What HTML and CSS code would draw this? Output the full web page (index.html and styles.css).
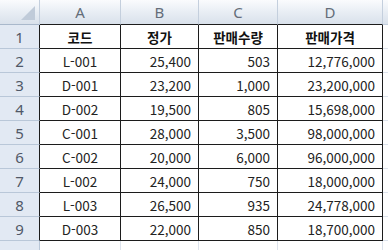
FILE: index.html
```html
<!DOCTYPE html>
<html lang="ko">
<head>
    <meta charset="UTF-8">
    <meta name="viewport" content="width=device-width, initial-scale=1.0">
    <title>판매 시트</title>
    <link rel="stylesheet" href="styles.css">
</head>
<body>
    <div class="sheet">
        <table class="grid">
            <colgroup>
                <col class="col-head">
                <col class="col-a">
                <col class="col-b">
                <col class="col-c">
                <col class="col-d">
                <col class="col-e">
            </colgroup>
            <thead>
                <tr>
                    <th class="corner"><span class="corner-mark"></span></th>
                    <th class="col-label">A</th>
                    <th class="col-label">B</th>
                    <th class="col-label">C</th>
                    <th class="col-label">D</th>
                    <th class="col-label col-out"></th>
                </tr>
            </thead>
            <tbody>
                <tr>
                    <th class="row-label">1</th>
                    <td class="title">코드</td>
                    <td class="title">정가</td>
                    <td class="title">판매수량</td>
                    <td class="title">판매가격</td>
                    <td class="out"></td>
                </tr>
                <tr>
                    <th class="row-label">2</th>
                    <td class="code">L-001</td>
                    <td class="num">25,400</td>
                    <td class="num">503</td>
                    <td class="num">12,776,000</td>
                    <td class="out"></td>
                </tr>
                <tr>
                    <th class="row-label">3</th>
                    <td class="code">D-001</td>
                    <td class="num">23,200</td>
                    <td class="num">1,000</td>
                    <td class="num">23,200,000</td>
                    <td class="out"></td>
                </tr>
                <tr>
                    <th class="row-label">4</th>
                    <td class="code">D-002</td>
                    <td class="num">19,500</td>
                    <td class="num">805</td>
                    <td class="num">15,698,000</td>
                    <td class="out"></td>
                </tr>
                <tr>
                    <th class="row-label">5</th>
                    <td class="code">C-001</td>
                    <td class="num">28,000</td>
                    <td class="num">3,500</td>
                    <td class="num">98,000,000</td>
                    <td class="out"></td>
                </tr>
                <tr>
                    <th class="row-label">6</th>
                    <td class="code">C-002</td>
                    <td class="num">20,000</td>
                    <td class="num">6,000</td>
                    <td class="num">96,000,000</td>
                    <td class="out"></td>
                </tr>
                <tr>
                    <th class="row-label">7</th>
                    <td class="code">L-002</td>
                    <td class="num">24,000</td>
                    <td class="num">750</td>
                    <td class="num">18,000,000</td>
                    <td class="out"></td>
                </tr>
                <tr>
                    <th class="row-label">8</th>
                    <td class="code">L-003</td>
                    <td class="num">26,500</td>
                    <td class="num">935</td>
                    <td class="num">24,778,000</td>
                    <td class="out"></td>
                </tr>
                <tr>
                    <th class="row-label">9</th>
                    <td class="code">D-003</td>
                    <td class="num">22,000</td>
                    <td class="num">850</td>
                    <td class="num">18,700,000</td>
                    <td class="out"></td>
                </tr>
                <tr class="row-out">
                    <th class="row-label"></th>
                    <td class="empty"></td>
                    <td class="empty"></td>
                    <td class="empty"></td>
                    <td class="empty"></td>
                    <td class="empty"></td>
                </tr>
            </tbody>
        </table>
    </div>
</body>
</html>
```

FILE: styles.css
```css
body {
    margin: 0;
    padding: 0;
    background: #fff;
    font-family: 'Noto Sans CJK KR', 'Noto Sans', sans-serif;
    overflow: hidden;
}

.sheet {
    width: 388px;
    height: 250px;
    overflow: hidden;
}

.grid {
    border-collapse: separate;
    border-spacing: 0;
    table-layout: fixed;
    width: 420px;
}

.col-head { width: 40px; }
.col-a { width: 81px; }
.col-b { width: 78px; }
.col-c { width: 79px; }
.col-d { width: 105px; }
.col-e { width: 37px; }

th, td {
    box-sizing: border-box;
    padding: 0;
    white-space: nowrap;
    overflow: hidden;
}

/* column letters */
.col-label,
.corner {
    height: 25px;
    background: linear-gradient(to bottom, #fafbfd 0%, #eaeff5 45%, #d9e1eb 100%);
    border-right: 1px solid #c4cfdd;
    border-bottom: 1px solid #1c1c1c;
    color: #646d79;
    font-family: 'Noto Sans', sans-serif;
    font-weight: normal;
    font-size: 15px;
    text-align: center;
}

.corner {
    position: relative;
    border-bottom-color: #a9b8cb;
}

.corner-mark {
    position: absolute;
    right: 4px;
    bottom: 4px;
    width: 0;
    height: 0;
    border-left: 14px solid transparent;
    border-bottom: 14px solid #c0cbd9;
}

.col-out {
    border-bottom-color: #c4cfdd;
}

/* row numbers */
.row-label {
    height: 24px;
    background: #e2e9f3;
    border-right: 1px solid #1c1c1c;
    border-bottom: 1px solid #b9c7d8;
    color: #505867;
    font-family: 'Noto Sans', sans-serif;
    font-weight: normal;
    font-size: 15px;
    text-align: center;
}

td {
    height: 24px;
    border-right: 1px solid #1c1c1c;
    border-bottom: 1px solid #1c1c1c;
    color: #222;
    font-size: 13.5px;
}

.title {
    font-weight: bold;
    text-align: center;
    color: #111;
}

.code {
    text-align: center;
}

.num {
    text-align: right;
    padding-right: 7px;
}

.out,
.empty {
    border-right: 1px solid #dde3ec;
    border-bottom: 1px solid #dde3ec;
}

.row-out .row-label {
    border-right-color: #b9c7d8;
}
```
